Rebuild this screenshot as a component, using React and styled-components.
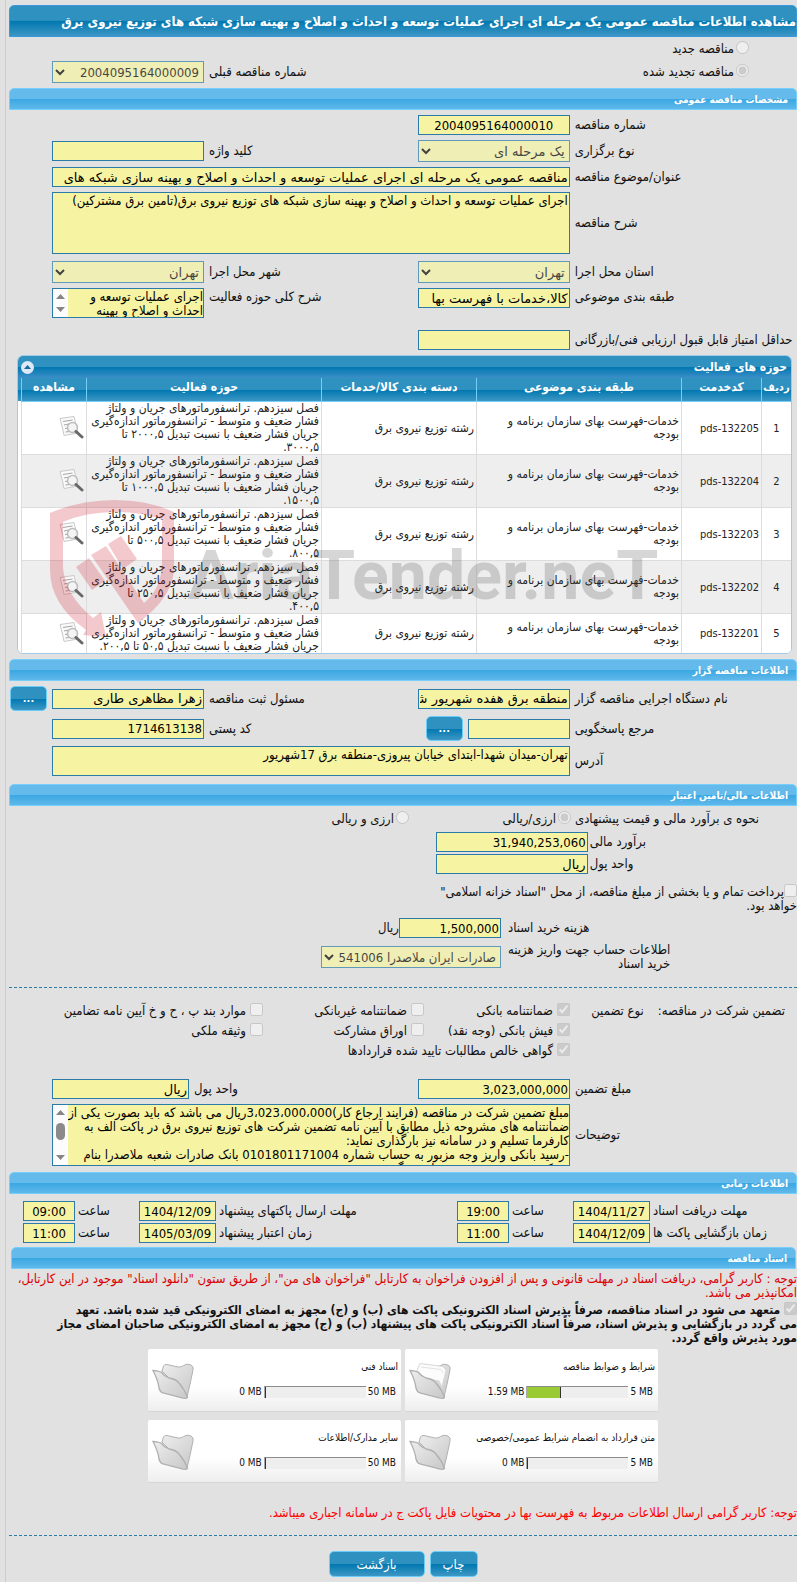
import React from "react";
import styled, { createGlobalStyle, css } from "styled-components";

const FONT = `"DejaVu Sans Condensed", "DejaVu Sans", sans-serif`;
const FIELD_FONT = `"DejaVu Sans", sans-serif`;

const GlobalStyle = createGlobalStyle`
  *, *::before, *::after { box-sizing: border-box; }
  body {
    margin: 0;
    background: #e1e1e1;
    color: #111;
    font: 13px/14px ${FONT};
    overflow-x: hidden;
  }
  input, select, textarea, button { font-family: ${FONT}; margin: 0; }
`;

const Page = styled.main`
  direction: rtl;
  margin-left: 5px;
  border-left: 1px solid #cbcbcb;
  padding: 5px 0 5px 3px;
`;

const PageTitle = styled.h1`
  height: 32px;
  margin: 0;
  border: 1px solid #3a97dc;
  border-radius: 5px 5px 0 0;
  background: linear-gradient(#2e91bf 0 48%, #0077b0 50%, #3d97c4);
  color: #fff;
  font-size: 13px;
  line-height: 32px;
  white-space: nowrap;
`;

const SectionTitle = styled.h2`
  height: 22px;
  margin: 0 ${(p) => (p.$inset ? "1px 0 2px" : "0")};
  padding: 0 8px;
  border: 1px solid #75cffa;
  border-radius: 5px 5px 0 0;
  background: linear-gradient(#64baea 0 50%, #3aa7e2 50%, #60b8ea);
  color: #fff;
  font-size: 10px;
  line-height: 21px;
`;

const Body = styled.section`
  display: flex;
  flex-direction: column;
  gap: ${(p) => p.$gap ?? 5}px;
  padding: ${(p) => p.$pad ?? "5px 0"};
`;

const FormRow = styled.div`
  display: grid;
  grid-template-columns: minmax(0, 12fr) 152px minmax(0, 11fr) 152px 38px;
  column-gap: 5px;
  align-items: ${(p) => (p.$top ? "start" : "center")};
  margin-top: ${(p) => p.$space ?? 0}px;
`;

const GuaranteeRow = styled(FormRow)`
  grid-template-columns: minmax(0, 222fr) 152px minmax(0, 219fr) 137px 38px;
`;

const MoneyRow = styled.div`
  display: grid;
  grid-template-columns: minmax(0, 208fr) 152px minmax(0, 426fr);
  column-gap: 2px;
  align-items: center;
`;

const CostRow = styled.div`
  display: grid;
  grid-template-columns: minmax(0, 289fr) minmax(0, 492fr);
  column-gap: 7px;
  align-items: center;
  min-height: 20px;
`;

const TimeRow = styled.div`
  display: grid;
  grid-template-columns: minmax(0, 144fr) 77px 58px 52px minmax(0, 235fr) 77px 58px 52px 11px;
  column-gap: 3px;
  align-items: center;
`;

const Label = styled.label`
  text-align: left;
  white-space: nowrap;
  padding-top: ${(p) => (p.$drop ? 2 : 0)}px;
`;

const AccountLabel = styled(Label)`
  justify-self: end;
  text-align: right;
`;

const box = css`
  border: 1px solid #2b7ba9;
  border-radius: 0;
  background: #f6f4a2;
  color: #000;
`;

const Input = styled.input`
  ${box}
  width: ${(p) => (p.$w ? `${p.$w}px` : "100%")};
  min-width: 0;
  height: 20px;
  padding: 0 1px;
  font-family: ${(p) => (p.$number ? FONT : FIELD_FONT)};
  font-size: 13px;
  text-align: ${(p) => (p.$center ? "center" : "right")};
  ${(p) => p.$wide && "grid-column: span 3;"}
`;

const Area = styled.textarea`
  ${box}
  display: block;
  width: 100%;
  height: ${(p) => p.$h}px;
  padding: 1px;
  font-size: 13px;
  line-height: 14px;
  resize: none;
  overflow: hidden;
  ${(p) => p.$wide && "grid-column: span 3;"}
`;

const ScrollFrame = styled.div`
  ${box}
  display: flex;
  height: ${(p) => p.$h}px;
  ${(p) => p.$wide && "grid-column: span 3;"}
  textarea {
    flex: 1;
    min-width: 0;
    height: 100%;
    border: 0;
    padding: 1px 0;
    white-space: pre;
  }
`;

const Track = styled.div`
  display: flex;
  flex-direction: column;
  align-items: center;
  justify-content: space-between;
  flex: none;
  width: 15px;
  padding: 5px 0;
  background: #fcfcfc;
`;

const Thumb = styled.span`
  width: 9px;
  height: 17px;
  margin-bottom: 8px;
  border-radius: 5px;
  background: #8b8b8b;
`;

const Select = styled.select`
  && { font-family: ${(p) => (p.$number ? FONT : FIELD_FONT)}; }
  width: ${(p) => (p.$w ? `${p.$w}px` : "100%")};
  height: 22px;
  border: 1px solid #2b7ba9;
  border-radius: 0;
  background-color: #f6f4a2;
  color: #000;
  font-size: 13px;
  opacity: 0.7;
`;

const shiny = css`
  border: 1px solid #69cdf7;
  border-radius: 5px;
  background: linear-gradient(#2e91bf 0 50%, #0077b0 50%, #3d97c4);
  color: #fff;
`;

const DotsButton = styled.button`
  ${shiny}
  width: 37px;
  height: 25px;
  padding: 0;
  font-size: 11px;
  font-weight: bold;
`;

const ActionButton = styled.button`
  ${shiny}
  height: 26px;
  width: ${(p) => p.$w}px;
  padding: 0;
  font-size: 13px;
`;

const Inline = styled.div`
  display: flex;
  align-items: center;
  gap: ${(p) => p.$gap ?? 5}px;
`;

const Choice = styled.label`
  display: flex;
  align-items: center;
  gap: ${(p) => p.$gap ?? 2}px;
  height: ${(p) => p.$h ?? 22}px;
  white-space: nowrap;
  ${(p) => p.$span && "grid-column: span 2;"}
  input { width: 13px; height: 13px; flex: none; margin-bottom: 3px; }
`;

const RenewalRow = styled(FormRow)`
  ${Choice} { padding-right: 48px; }
  ${Label} { grid-column: 3; }
`;

const EstimateRow = styled.div`
  display: grid;
  grid-template-columns: minmax(0, 222fr) 158px minmax(0, 400fr);
  column-gap: 4px;
  align-items: center;
`;

const Dashes = styled.hr`
  width: 100%;
  height: 1px;
  margin: 0;
  border: 0;
  background: repeating-linear-gradient(90deg, #2b7ba9 0 3px, transparent 3px 5px);
`;

const Guarantees = styled.div`
  display: grid;
  grid-template-columns: minmax(0, 227fr) 146px 161px minmax(0, 254fr);
`;

const GuaranteeLabels = styled.div`
  display: flex;
  gap: 14px;
  height: 20px;
  align-items: center;
  padding-right: 12px;
  white-space: nowrap;
`;

const Note = styled.p`
  margin: 0;
  white-space: nowrap;
  color: ${(p) => p.$color ?? "#111"};
  font-weight: ${(p) => (p.$bold ? "bold" : "normal")};
  font-size: ${(p) => (p.$bold ? 12 : 13)}px;
  input { width: 13px; height: 13px; margin: 0; vertical-align: -1px; }
`;

/* activity table */
const Panel = styled.div`
  position: relative;
  margin: 0 5px 0 8px;
  border: 1px solid #a0cbe8;
  border-radius: 6px;
  background: #fff;
  overflow: hidden;
`;

const PanelHead = styled.div`
  display: flex;
  justify-content: space-between;
  align-items: center;
  height: 22px;
  padding: 0 4px 0 3px;
  background: linear-gradient(#2e91bf 0 50%, #0077b0 50%, #3d8fc8);
  color: #fff;
  font-size: 12px;
  font-weight: bold;
`;

const Collapse = styled.button`
  display: grid;
  place-items: center;
  width: 13px;
  height: 13px;
  padding: 0;
  border: 0;
  border-radius: 50%;
  background: #dde8f6;
`;

const HeadFill = styled.div`
  padding-left: 3px;
  background: linear-gradient(#2e91bf 0 12px, #0077b0 12px, #3d97c4 23px, #fff 23px);
`;

const Table = styled.table`
  width: 100%;
  table-layout: fixed;
  border-collapse: separate;
  border-spacing: 0;
  font-size: 12px;
  line-height: 13px;
  th {
    height: 24px;
    padding: 0 0 4px;
    border-left: 1px solid #75cffa;
    border-bottom: 1px solid #75cffa;
    color: #fff;
    font-size: 12px;
    white-space: nowrap;
  }
  th:first-child { font-size: 11px; }
  td {
    padding: 0 2px;
    border-left: 1px solid #dcdcdc;
    border-bottom: 1px solid #dcdcdc;
    background: #fff;
    color: #222;
    white-space: pre;
  }
  tr:nth-child(even) td { background: #eee; }
  tr:last-child td { border-bottom: 0; }
  td:nth-child(1) { text-align: center; font-size: 11px; }
  td:nth-child(2) { font-size: 11px; }
  td svg { display: block; }
`;

const Watermark = styled.div`
  position: absolute;
  left: 32px;
  top: 144px;
  display: flex;
  align-items: flex-start;
  direction: ltr;
  opacity: 0.22;
  pointer-events: none;
  span {
    color: #4a4a4a;
    font: bold 68px/80px Roboto, sans-serif;
    white-space: nowrap;
    margin-left: 12px;
    padding-top: 36px;
  }
`;

/* document cards */
const Cards = styled.div`
  display: grid;
  grid-template-columns: 253px 253px;
  justify-content: center;
  gap: 8px 4px;
`;

const CardBox = styled.article`
  display: flex;
  flex-direction: row-reverse;
  height: 63px;
  padding: 0 3px;
  border-bottom: 1px solid #d4d4d4;
  border-radius: 2px;
  background: linear-gradient(#fff 60%, #eee);
  font-size: 10px;
  svg { flex: none; margin-top: 12px; }
`;

const CardText = styled.div`
  display: flex;
  flex-direction: column;
  gap: 11px;
  flex: 1;
  padding-top: 11px;
  white-space: nowrap;
`;

const Meter = styled.div`
  display: flex;
  align-items: center;
  gap: 2px;
  padding-right: 2px;
  height: 14px;
  font-size: 10px;
`;

const Bar = styled.div`
  direction: ltr;
  width: 102px;
  height: 12px;
  border-top: 1px solid #8c8c8c;
  border-left: 1px solid #a8a8a8;
  background: #eee;
  div { height: 100%; background: #9acb34; border-right: 1px solid #333; }
`;

const Actions = styled.div`
  display: flex;
  justify-content: center;
  gap: 5px;
`;

function Arrow({ up }) {
  return (
    <svg width="9" height="5" viewBox="0 0 9 5">
      <path d={up ? "M0 5 4.500 0 9 5Z" : "M0 0 4.500 5 9 0Z"} fill="#858585" />
    </svg>
  );
}

function ScrollArea({ id, h, wide, thumb, text }) {
  return (
    <ScrollFrame $h={h} $wide={wide}>
      <Area id={id} $h={h - 2} readOnly defaultValue={text} />
      <Track>
        <Arrow up />
        {thumb && <Thumb />}
        <Arrow />
      </Track>
    </ScrollFrame>
  );
}

function ViewIcon() {
  return (
    <svg width="26" height="26" viewBox="0 0 26 26">
      <path d="M2 3.500 16 1.500 18.500 12 20 18 6 20.500Q5 14 2 3.500Z" fill="#fafafa" stroke="#c9c9c9" />
      <path d="M5 6.500 14.500 5M6 10 11 9M7 13.500 10 13M7.500 17 12 16.500" stroke="#a5a5a5" fill="none" />
      <circle cx="14.500" cy="12.500" r="5" fill="#f2f2f2" fillOpacity=".85" stroke="#bdbdbd" strokeWidth="1.500" />
      <path d="M18 16.500 24 22" stroke="#686868" strokeWidth="3" strokeLinecap="round" />
    </svg>
  );
}

function Folder({ full }) {
  return (
    <svg width="46" height="42" viewBox="0 0 46 42">
      <defs>
        <linearGradient id="fold" x1="0" y1="0" x2="1" y2="1">
          <stop offset="0" stopColor="#ededed" />
          <stop offset="1" stopColor="#c8c8c8" />
        </linearGradient>
      </defs>
      <path
        d="M11 10 12.500 5Q13.500 3 16 3.500L27 6Q30 6.500 32.500 4.500Q36 2 40 4Q43 5.500 42 9Q39 24 36 36L33 32Z"
        fill="url(#fold)" stroke="#b2b2b2"
      />
      {full && <path d="M9 9 12 2.500 35 5.500 38 9 34 26 31 20 9 16Z" fill="#fcfcfc" stroke="#d8d8d8" />}
      {full && <path d="M13 6 33 8.500 35 12" fill="none" stroke="#e2e2e2" />}
      <path
        d="M2 9.500Q6 9.500 10 11Q13 15 18 17Q25 18 28 22Q34 29 36.500 36.500Q35 38 32 37L12 32Q9 31 8 27Q7 19 2 9.500Z"
        fill="url(#fold)" stroke="#b0b0b0" strokeWidth="1.300"
      />
    </svg>
  );
}

const ROWS = [
  ["1", "pds-132205", "جریان فشار ضعیف با نسبت تبدیل ۲۰۰۰,۵ تا\n۳۰۰۰,۵."],
  ["2", "pds-132204", "جریان فشار ضعیف با نسبت تبدیل ۱۰۰۰,۵ تا\n۱۵۰۰,۵."],
  ["3", "pds-132203", "جریان فشار ضعیف با نسبت تبدیل ۵۰۰,۵ تا\n۸۰۰,۵."],
  ["4", "pds-132202", "جریان فشار ضعیف با نسبت تبدیل ۲۵۰,۵ تا\n۴۰۰,۵."],
  ["5", "pds-132201", "جریان فشار ضعیف با نسبت تبدیل ۵۰,۵ تا ۲۰۰,۵."],
];

const FIELD_START = "فصل سیزدهم. ترانسفورماتورهای جریان و ولتاژ\nفشار ضعیف و متوسط - ترانسفورماتور اندازه‌گیری\n";

function ActivityTable() {
  return (
    <Panel>
      <PanelHead>
        <span>حوزه های فعالیت</span>
        <Collapse type="button" aria-label="بستن">
          <svg width="7" height="4" viewBox="0 0 7 4"><path d="M0 4 3.500 0 7 4Z" fill="#14689a" /></svg>
        </Collapse>
      </PanelHead>
      <HeadFill>
        <Table>
          <colgroup>
            <col width="30" />
            <col width="80" />
            <col width="205" />
            <col width="155" />
            <col />
            <col width="65" />
          </colgroup>
          <thead>
            <tr>
              <th>ردیف</th>
              <th>کدخدمت</th>
              <th>طبقه بندی موضوعی</th>
              <th>دسته بندی کالا/خدمات</th>
              <th>حوزه فعالیت</th>
              <th>مشاهده</th>
            </tr>
          </thead>
          <tbody>
            {ROWS.map(([n, code, tail]) => (
              <tr key={n}>
                <td>{n}</td>
                <td>{code}</td>
                <td>{"خدمات-فهرست بهای سازمان برنامه و\nبودجه"}</td>
                <td>رشته توزیع نیروی برق</td>
                <td>{FIELD_START + tail}</td>
                <td><ViewIcon /></td>
              </tr>
            ))}
          </tbody>
        </Table>
      </HeadFill>
      <Watermark aria-hidden="true">
        <svg width="126" height="138" viewBox="0 0 126 138">
          <path
            d="M0 13Q30 0 65 0Q98 0 124 12V70Q122 98 88 123L65 88 73 82 94 103Q112 88 112 62V20Q94 12 65 12Q36 12 13 22V68Q16 96 43 118L51 112 56 137 33 135 36 130Q0 104 0 70Z"
            fill="#d01020"
          />
          <path d="M26 67 39 58 55 81 42 90Z" fill="#d01020" />
          <path d="M41 55 56 46 94 103 88 123Z" fill="#d01020" />
          <path d="M58 44 71 36 87 59 73 69Z" fill="#d01020" />
        </svg>
        <span>AriaTender.neT</span>
      </Watermark>
    </Panel>
  );
}

function Card({ title, max, used, fill, full }) {
  return (
    <CardBox>
      <Folder full={full} />
      <CardText>
        <span>{title}</span>
        <Meter>
          <span dir="ltr">{max}</span>
          <Bar role="progressbar" aria-label={title} aria-valuenow={fill}>
            <div style={{ width: `${fill}%` }} />
          </Bar>
          <span dir="ltr">{used}</span>
        </Meter>
      </CardText>
    </CardBox>
  );
}

function Check({ children, checked, ...rest }) {
  return (
    <Choice $gap={4} $h={20} {...rest}>
      <input type="checkbox" disabled defaultChecked={checked} />
      {children}
    </Choice>
  );
}

function Times({ items }) {
  return (
    <TimeRow>
      {items.map(([id, label, date, hour]) => (
        <React.Fragment key={id}>
          <Label htmlFor={id}>{label}</Label>
          <Input id={id} $number $center readOnly defaultValue={date} />
          <Label htmlFor={`${id}-hour`}>ساعت</Label>
          <Input id={`${id}-hour`} $number $center readOnly defaultValue={hour} />
        </React.Fragment>
      ))}
    </TimeRow>
  );
}

export default function App() {
  return (
    <Page lang="fa">
      <GlobalStyle />
      <PageTitle>
        مشاهده اطلاعات مناقصه عمومی یک مرحله ای اجرای عملیات توسعه و احداث و اصلاح و بهینه سازی شبکه های توزیع نیروی برق
      </PageTitle>
      <Body $gap={1} $pad="1px 0 5px">
        <RenewalRow>
          <Choice><input type="radio" name="kind" disabled />مناقصه جدید</Choice>
        </RenewalRow>
        <RenewalRow>
          <Choice><input type="radio" name="kind" disabled defaultChecked />مناقصه تجدید شده</Choice>
          <Label htmlFor="previous">شماره مناقصه قبلی</Label>
          <Select id="previous" $number disabled><option>2004095164000009</option></Select>
        </RenewalRow>
      </Body>

      <SectionTitle>مشخصات مناقصه عمومی</SectionTitle>
      <Body>
        <FormRow>
          <Label htmlFor="number">شماره مناقصه</Label>
          <Input id="number" $number $center readOnly defaultValue="2004095164000010" />
        </FormRow>
        <FormRow>
          <Label htmlFor="type">نوع برگزاری</Label>
          <Select id="type" disabled><option>یک مرحله ای</option></Select>
          <Label htmlFor="keyword">کلید واژه</Label>
          <Input id="keyword" readOnly />
        </FormRow>
        <FormRow>
          <Label htmlFor="subject">عنوان/موضوع مناقصه</Label>
          <Input id="subject" $wide readOnly defaultValue="مناقصه عمومی یک مرحله ای اجرای عملیات توسعه و احداث و اصلاح و بهینه سازی شبکه های" />
        </FormRow>
        <FormRow>
          <Label htmlFor="about">شرح مناقصه</Label>
          <Area id="about" $wide $h={62} readOnly defaultValue="اجرای عملیات توسعه و احداث و اصلاح و بهینه سازی شبکه های توزیع نیروی برق(تامین برق مشترکین)" />
        </FormRow>
        <FormRow $space={2}>
          <Label htmlFor="province">استان محل اجرا</Label>
          <Select id="province" disabled><option>تهران</option></Select>
          <Label htmlFor="city">شهر محل اجرا</Label>
          <Select id="city" disabled><option>تهران</option></Select>
        </FormRow>
        <FormRow $top>
          <Label $drop htmlFor="category">طبقه بندی موضوعی</Label>
          <Input id="category" readOnly defaultValue="کالا،خدمات با فهرست بها" />
          <Label $drop htmlFor="scope">شرح کلی حوزه فعالیت</Label>
          <ScrollArea id="scope" h={30} text={"اجرای عملیات توسعه و\nاحداث و اصلاح و بهینه"} />
        </FormRow>
        <FormRow $space={7}>
          <Label htmlFor="score">حداقل امتیاز قابل قبول ارزیابی فنی/بازرگانی</Label>
          <Input id="score" readOnly />
        </FormRow>
      </Body>

      <ActivityTable />

      <Body $pad="5px 0 0">
        <SectionTitle>اطلاعات مناقصه گزار</SectionTitle>
        <FormRow>
          <Label htmlFor="agency">نام دستگاه اجرایی مناقصه گزار</Label>
          <Input id="agency" readOnly defaultValue="منطقه برق هفده شهریور شهر تهران" />
          <Label htmlFor="owner">مسئول ثبت مناقصه</Label>
          <Input id="owner" readOnly defaultValue="زهرا مظاهری طاری" />
          <DotsButton type="button">...</DotsButton>
        </FormRow>
        <FormRow>
          <Label htmlFor="contact">مرجع پاسخگویی</Label>
          <Inline>
            <Input id="contact" $w={102} readOnly />
            <DotsButton type="button">...</DotsButton>
          </Inline>
          <Label htmlFor="post">کد پستی</Label>
          <Input id="post" $number readOnly defaultValue="1714613138" />
        </FormRow>
        <FormRow>
          <Label htmlFor="address">آدرس</Label>
          <Area id="address" $wide $h={30} readOnly defaultValue="تهران-میدان شهدا-ابتدای خیابان پیروزی-منطقه برق 17شهریور" />
        </FormRow>
      </Body>

      <Body $pad="8px 0 0" $gap={2}>
        <SectionTitle>اطلاعات مالی/تامین اعتبار</SectionTitle>
        <EstimateRow>
          <Label as="span">نحوه ی برآورد مالی و قیمت پیشنهادی</Label>
          <Choice><input type="radio" name="currency" disabled defaultChecked />ارزی/ریالی</Choice>
          <Choice><input type="radio" name="currency" disabled />ارزی و ریالی</Choice>
        </EstimateRow>
        <MoneyRow>
          <Label htmlFor="estimate">برآورد مالی</Label>
          <Input id="estimate" $number readOnly defaultValue="31,940,253,060" />
        </MoneyRow>
        <MoneyRow>
          <Label htmlFor="unit">واحد پول</Label>
          <Input id="unit" readOnly defaultValue="ریال" />
        </MoneyRow>
      </Body>
      <Body $pad="10px 0 16px">
        <Note as="label">
          <input type="checkbox" disabled />
          پرداخت تمام و یا بخشی از مبلغ مناقصه، از محل "اسناد خزانه اسلامی"
          <br />
          خواهد بود.
        </Note>
        <CostRow>
          <Label htmlFor="fee">هزینه خرید اسناد</Label>
          <Inline $gap={0}>
            <Input id="fee" $number $w={102} readOnly defaultValue="1,500,000" />
            ریال
          </Inline>
        </CostRow>
        <CostRow>
          <AccountLabel htmlFor="account">اطلاعات حساب جهت واریز هزینه<br />خرید اسناد</AccountLabel>
          <Select id="account" $number $w={180} disabled><option>صادرات ایران ملاصدرا 541006</option></Select>
        </CostRow>
      </Body>

      <Dashes />
      <Body $pad="13px 0 6px">
        <Guarantees>
          <GuaranteeLabels>
            <span>تضمین شرکت در مناقصه:</span>
            <span>نوع تضمین</span>
          </GuaranteeLabels>
          <Check checked>ضمانتنامه بانکی</Check>
          <Check>ضمانتنامه غیربانکی</Check>
          <Check>موارد بند پ ، ح و خ آیین نامه تضامین</Check>
          <span />
          <Check checked>فیش بانکی (وجه نقد)</Check>
          <Check>اوراق مشارکت</Check>
          <Check>وثیقه ملکی</Check>
          <span />
          <Check checked $span>گواهی خالص مطالبات تایید شده قراردادها</Check>
        </Guarantees>
        <GuaranteeRow $space={13}>
          <Label htmlFor="amount">مبلغ تضمین</Label>
          <Input id="amount" $number readOnly defaultValue="3,023,000,000" />
          <Label htmlFor="amount-unit">واحد پول</Label>
          <Input id="amount-unit" readOnly defaultValue="ریال" />
        </GuaranteeRow>
        <GuaranteeRow>
          <Label htmlFor="remarks">توضیحات</Label>
          <ScrollArea
            id="remarks"
            h={62}
            wide
            thumb
            text={
              "مبلغ تضمین شرکت در مناقصه (فرایند ارجاع کار)3،023،000،000ریال می باشد که باید بصورت یکی از\n" +
              "ضمانتنامه های مشروحه ذیل مطابق با آیین نامه تضمین شرکت های توزیع نیروی برق در پاکت الف به\n" +
              "کارفرما تسلیم و در سامانه نیز بارگذاری نماید:\n" +
              "-رسید بانکی واریز وجه مزبور به حساب شماره 0101801171004 بانک صادرات شعبه ملاصدرا بنام\n" +
              "شرکت توزیع نیروی برق تهران بزرگ"
            }
          />
        </GuaranteeRow>
      </Body>

      <SectionTitle>اطلاعات زمانی</SectionTitle>
      <Body $pad="7px 0 4px" $gap={2}>
        <Times items={[
          ["receive", "مهلت دریافت اسناد", "1404/11/27", "19:00"],
          ["send", "مهلت ارسال پاکتهای پیشنهاد", "1404/12/09", "09:00"],
        ]} />
        <Times items={[
          ["open", "زمان بازگشایی پاکت ها", "1404/12/09", "11:00"],
          ["valid", "زمان اعتبار پیشنهاد", "1405/03/09", "11:00"],
        ]} />
      </Body>

      <SectionTitle $inset>اسناد مناقصه</SectionTitle>
      <Body $gap={2} $pad="3px 0 4px">
        <Note $color="#dd0000">
          توجه : کاربر گرامی، دریافت اسناد در مهلت قانونی و پس از افزودن فراخوان به کارتابل "فراخوان های من"، از طریق ستون "دانلود اسناد" موجود در این کارتابل،
          <br />
          امکانپذیر می باشد.
        </Note>
        <Note as="label" $bold>
          <input type="checkbox" disabled defaultChecked />{" "}
          متعهد می شود در اسناد مناقصه، صرفاً پذیرش اسناد الکترونیکی پاکت های (ب) و (ج) مجهز به امضای الکترونیکی قید شده باشد. تعهد
          <br />
          می گردد در بازگشایی و پذیرش اسناد، صرفاً اسناد الکترونیکی پاکت های پیشنهاد (ب) و (ج) مجهز به امضای الکترونیکی صاحبان امضای مجاز
          <br />
          مورد پذیرش واقع گردد.
        </Note>
      </Body>
      <Cards>
        <Card title="شرایط و ضوابط مناقصه" max="5 MB" used="1.59 MB" fill={33} full />
        <Card title="اسناد فنی" max="50 MB" used="0 MB" fill={1} />
        <Card title="متن قرارداد به انضمام شرایط عمومی/خصوصی" max="5 MB" used="0 MB" fill={1} />
        <Card title="سایر مدارک/اطلاعات" max="50 MB" used="0 MB" fill={1} />
      </Cards>
      <Body $gap={15} $pad="23px 0 0">
        <Note $color="#ff0000">
          توجه: کاربر گرامی ارسال اطلاعات مربوط به فهرست بها در محتویات فایل پاکت ج در سامانه اجباری میباشد.
        </Note>
        <Dashes />
        <Actions>
          <ActionButton type="button" $w={48}>چاپ</ActionButton>
          <ActionButton type="button" $w={96}>بازگشت</ActionButton>
        </Actions>
      </Body>
    </Page>
  );
}
